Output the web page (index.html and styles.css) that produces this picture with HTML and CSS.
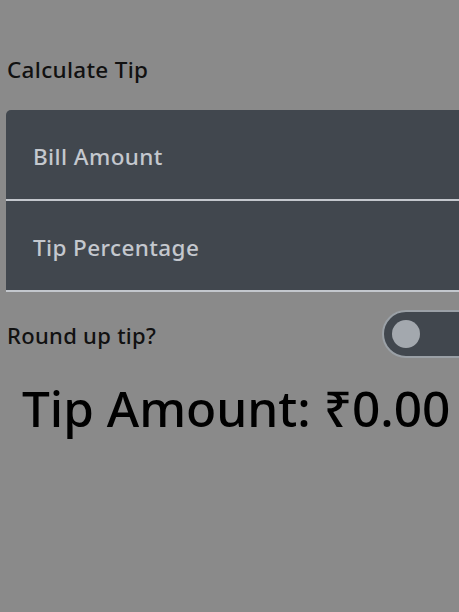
FILE: index.html
```html
<!DOCTYPE html>
<html>
<head>
<meta charset="utf-8">
<link rel="stylesheet" href="styles.css">
</head>
<body>
<div class="screen">
  <div class="title">Calculate Tip</div>
  <div class="fields">
    <div class="field"><span class="label">Bill Amount</span></div>
    <div class="field"><span class="label">Tip Percentage</span></div>
  </div>
  <div class="round-row">
    <span class="round-label">Round up tip?</span>
    <div class="toggle"><div class="thumb"></div></div>
  </div>
  <div class="result">Tip Amount: ₹0.00</div>
</div>
</body>
</html>
```
FILE: styles.css
```css
html, body {
  margin: 0;
  padding: 0;
  background: #8a8a8a;
  overflow: hidden;
  height: 100%;
}
.screen {
  width: 500px;
  padding: 54px 0 0 6px;
  font-family: "Noto Sans", "Open Sans", sans-serif;
  font-weight: 500;
  box-sizing: border-box;
}
.title {
  font-size: 22.5px;
  color: #111;
  line-height: 32px;
  padding-left: 1px;
  letter-spacing: 0.3px;
}
.fields {
  margin-top: 24px;
  display: flex;
  flex-direction: column;
}
.field {
  background: #41474e;
  border-radius: 5px 0 0 0;
  border-bottom: 2px solid #c3c7cd;
  display: flex;
  align-items: center;
  padding-left: 27px;
  box-sizing: border-box;
  height: 91px;
}
.field + .field {
  border-radius: 0;
}
.label {
  color: #c4c8ce;
  font-size: 22.5px;
  letter-spacing: 0.4px;
  padding-top: 3px;
}
.round-row {
  display: flex;
  align-items: center;
  justify-content: space-between;
  margin-top: 17px;
  height: 50px;
}
.round-label {
  font-size: 22px;
  color: #111;
  padding-left: 1px;
  letter-spacing: 0.3px;
  padding-top: 2px;
}
.toggle {
  width: 100px;
  height: 48px;
  margin-right: 18px;
  border-radius: 24px;
  background: #41474e;
  border: 2px solid #9aa0a6;
  box-sizing: border-box;
  display: flex;
  align-items: center;
  padding-left: 8px;
}
.thumb {
  width: 28px;
  height: 28px;
  border-radius: 50%;
  background: #a3a8ae;
}
.result {
  margin-top: 15px;
  font-size: 49.5px;
  color: #000;
  padding-left: 16px;
  line-height: 68px;
}
```
